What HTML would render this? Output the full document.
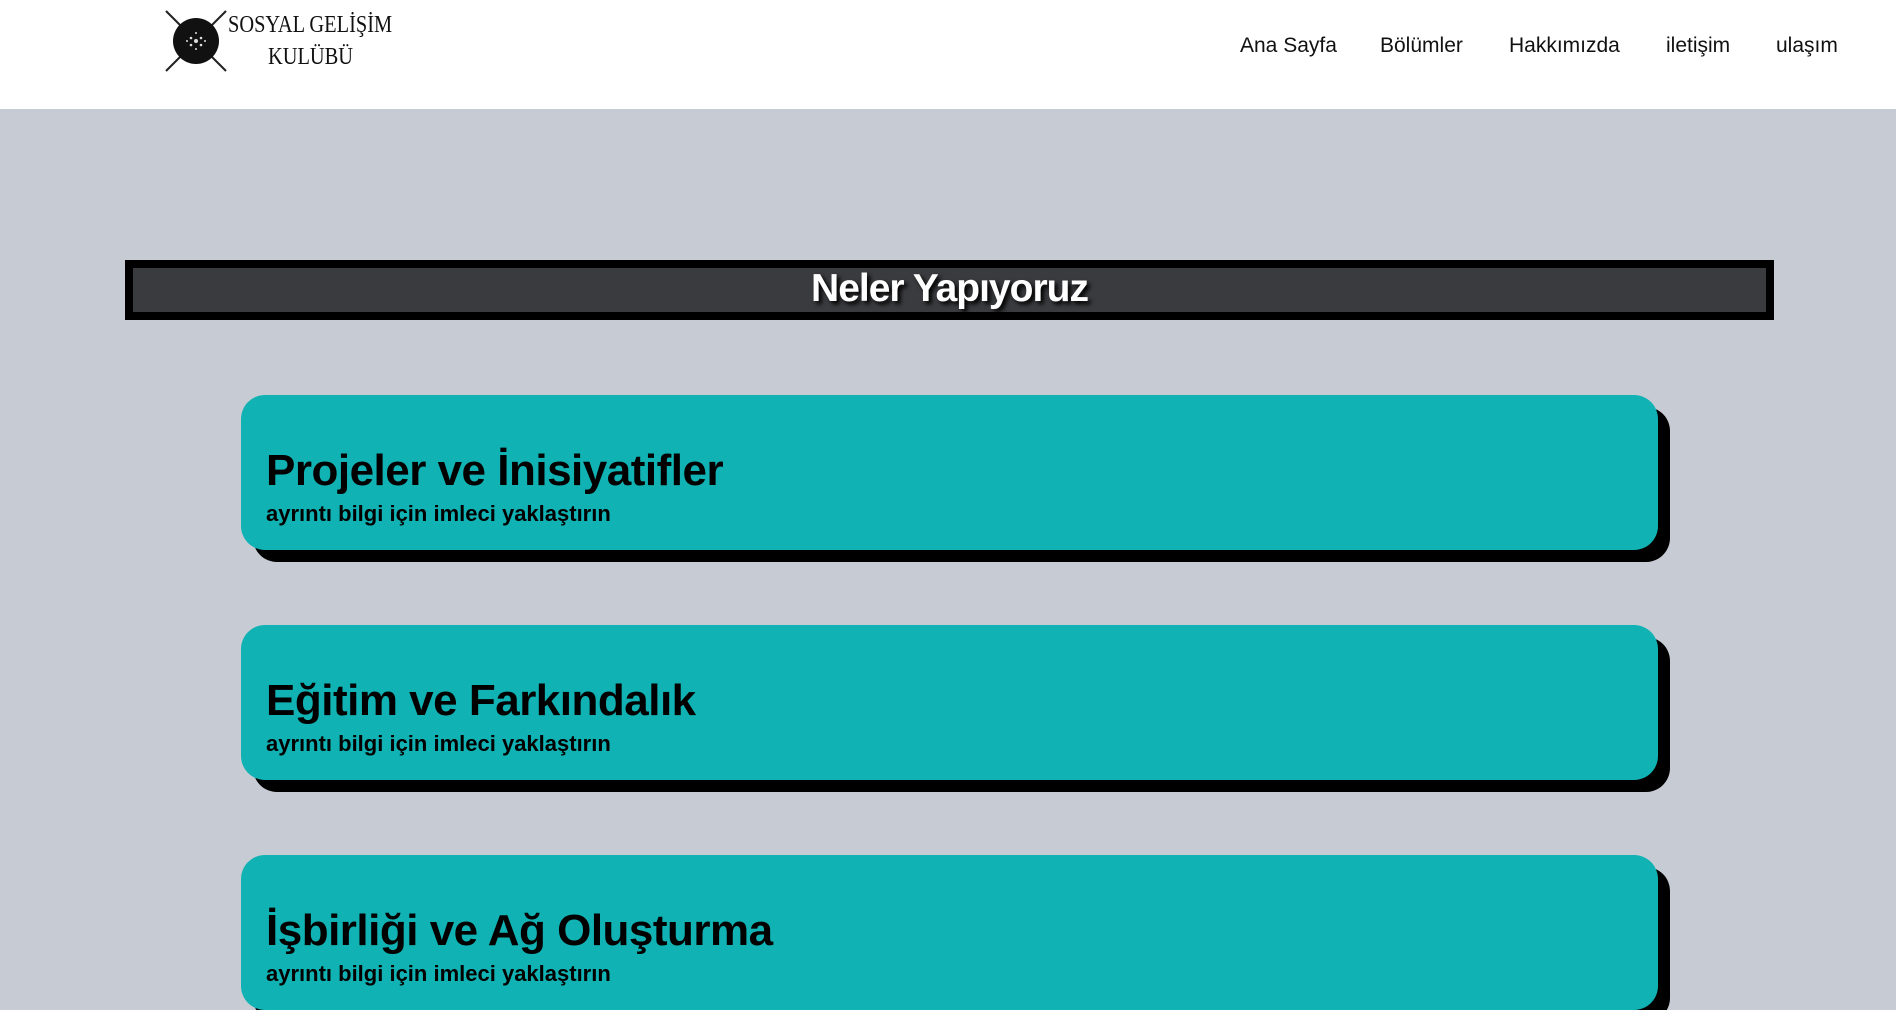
<!DOCTYPE html>
<html><head><meta charset="utf-8"><style>
*{margin:0;padding:0;box-sizing:border-box}
body{width:1896px;height:926px;overflow:hidden;background:#c7cbd4;font-family:"Liberation Sans",sans-serif;position:relative}
.hdr{position:absolute;left:0;top:0;width:1896px;height:109px;background:#fff}
.nav{position:absolute;top:34px;font-size:21px;color:#111;white-space:nowrap;font-weight:500}
.logo{position:absolute;font-family:"Liberation Serif",serif;font-size:24px;color:#111;white-space:nowrap;transform-origin:left top}
.banner{position:absolute;left:125px;top:260px;width:1649px;height:60px;background:#3a3b3e;border:8px solid #000;text-align:center;color:#fff;font-weight:bold;font-size:39px;line-height:42px;text-shadow:3px 3px 4px #000;letter-spacing:-1px}
.card{position:absolute;left:241px;width:1417px;height:155px;background:#11b2b3;border-radius:24px;box-shadow:12px 12px 0 #000}
.card h2{position:absolute;left:25px;top:51px;font-size:44px;font-weight:bold;color:#000;white-space:nowrap;letter-spacing:-0.5px}
.card p{position:absolute;left:25px;top:106px;font-size:22px;font-weight:bold;color:#000;white-space:nowrap}
</style></head><body>
<div class="hdr">
<svg style="position:absolute;left:160px;top:8px" width="72" height="66" viewBox="0 0 72 66">
<line x1="6" y1="3" x2="66" y2="63" stroke="#222" stroke-width="2"/>
<line x1="66" y1="3" x2="6" y2="63" stroke="#222" stroke-width="2"/>
<circle cx="36" cy="33" r="23" fill="#111"/>
<g fill="#ddd"><circle cx="36" cy="33" r="2"/><circle cx="31" cy="30" r="1.3"/><circle cx="41" cy="30" r="1.3"/><circle cx="31" cy="37" r="1.3"/><circle cx="41" cy="37" r="1.3"/><circle cx="36" cy="25" r="1"/><circle cx="36" cy="41" r="1"/><circle cx="27" cy="33" r="1"/><circle cx="45" cy="33" r="1"/></g>
</svg>
<div class="logo" style="left:228px;top:12px;transform:scaleX(.85)">SOSYAL GELİŞİM</div>
<div class="logo" style="left:268px;top:44px;transform:scaleX(.85)">KULÜBÜ</div>
<div class="nav" style="left:1240px">Ana Sayfa</div>
<div class="nav" style="left:1380px">Bölümler</div>
<div class="nav" style="left:1509px">Hakkımızda</div>
<div class="nav" style="left:1666px">iletişim</div>
<div class="nav" style="left:1776px">ulaşım</div>
</div>
<div class="banner">Neler Yapıyoruz</div>
<div class="card" style="top:395px"><h2>Projeler ve İnisiyatifler</h2><p>ayrıntı bilgi için imleci yaklaştırın</p></div>
<div class="card" style="top:625px"><h2>Eğitim ve Farkındalık</h2><p>ayrıntı bilgi için imleci yaklaştırın</p></div>
<div class="card" style="top:855px"><h2>İşbirliği ve Ağ Oluşturma</h2><p>ayrıntı bilgi için imleci yaklaştırın</p></div>
</body></html>
